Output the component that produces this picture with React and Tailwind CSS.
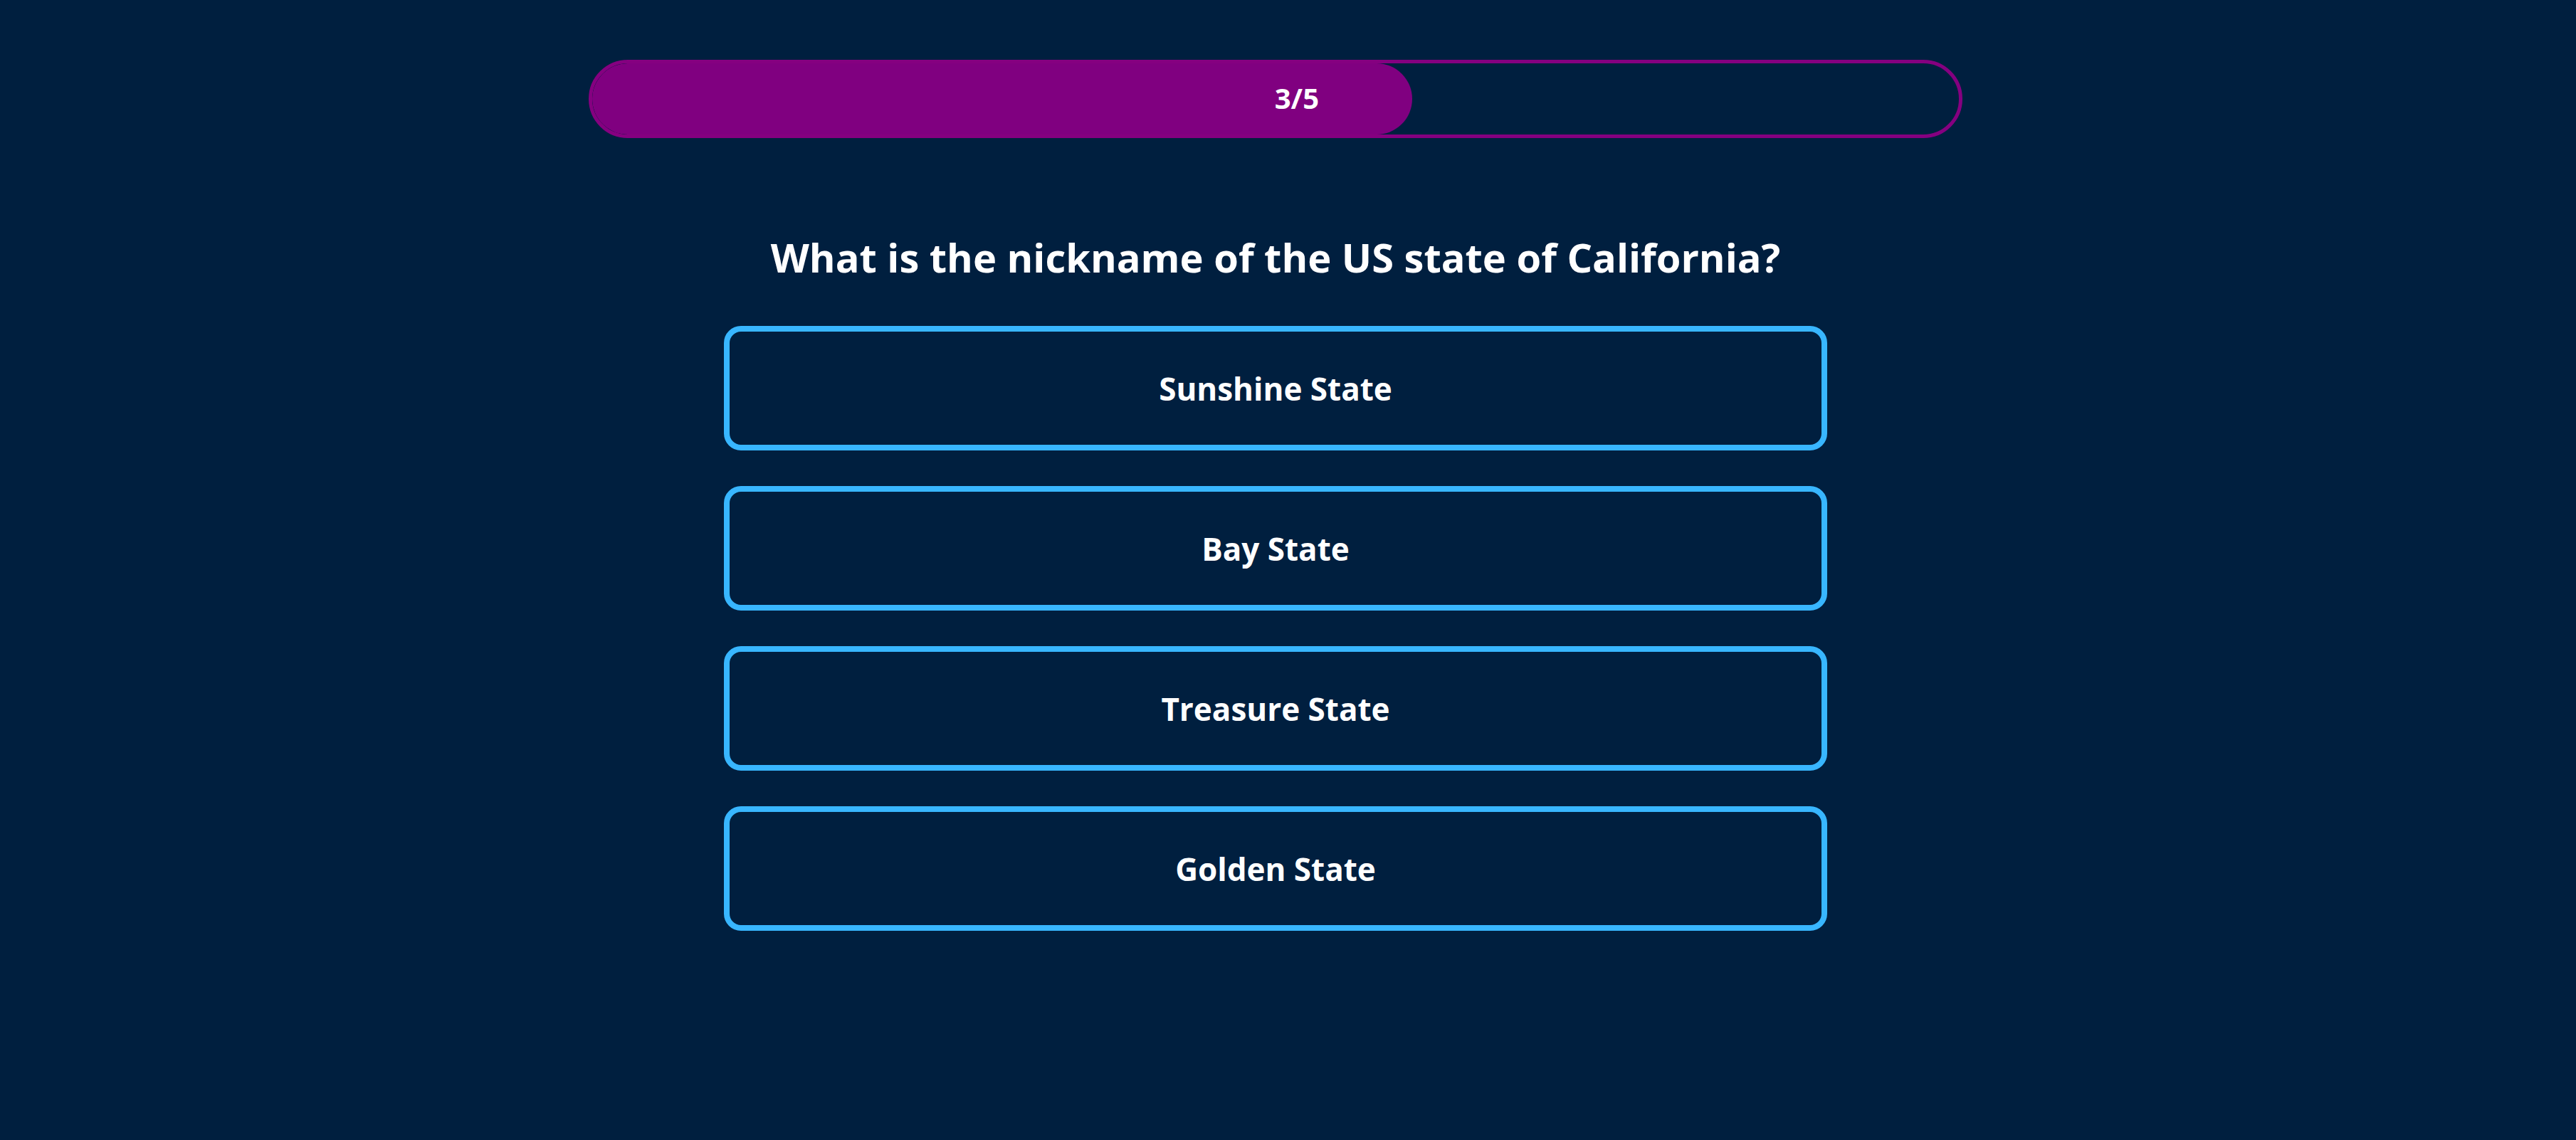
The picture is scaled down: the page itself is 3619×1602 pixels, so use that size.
export default function App() {
  const answers = ["Sunshine State", "Bay State", "Treasure State", "Golden State"];
  return (
    <div className="min-h-screen w-full bg-[#001f3f] text-white" style={{ fontFamily: '"Open Sans", "Noto Sans", sans-serif' }}>
      <div className="w-[3584px] flex flex-col items-center pt-[84px]">
        <div className="w-[1930px] h-[110px] rounded-full border-[5px] border-[#850080] overflow-hidden">
          <div className="h-full w-[60%] rounded-full bg-[#800080] flex items-center justify-end pr-[131px]">
            <span className="font-bold text-[40px] leading-none -mt-[3px]">3/5</span>
          </div>
        </div>
        <h1 className="mt-[139px] font-bold text-[56px] leading-none">What is the nickname of the US state of California?</h1>
        <div className="mt-[69px] flex flex-col gap-[50px]">
          {answers.map((a) => (
            <button key={a} className="w-[1550px] h-[175px] rounded-[24px] border-[8px] border-[#38b6ff] bg-transparent flex items-center justify-center font-bold text-[44px] text-white">
              {a}
            </button>
          ))}
        </div>
      </div>
    </div>
  );
}
